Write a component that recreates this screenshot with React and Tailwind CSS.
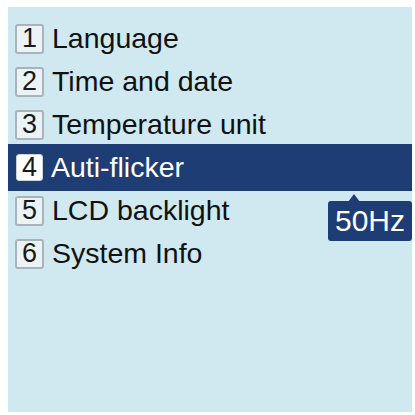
export default function App() {
  const items = ["Language", "Time and date", "Temperature unit", "Auti-flicker", "LCD backlight", "System Info"];
  return (
    <div className="w-[415px] h-[415px] bg-white pt-[7px] pl-[8px]" style={{ fontFamily: '"Liberation Sans", Arial, sans-serif' }}>
      <div className="relative w-[404px] h-[405px] bg-[#d0e8ef] pt-[10px]">
        {items.map((t, i) => {
          const sel = i === 3;
          return (
            <div
              key={t}
              className={
                sel
                  ? "flex items-center h-[47px] -my-[2px] bg-[#1e3d74] pl-[8px] text-white"
                  : "flex items-center h-[43px] pl-[7px] text-[#111111]"
              }
            >
              <div
                className={
                  sel
                    ? "w-[27px] h-[27px] flex items-center justify-center rounded-[3px] bg-white border border-[#c9d3dc] text-[#1a1a1a] text-[27px] leading-none"
                    : "w-[29px] h-[30px] flex items-center justify-center rounded-[3px] bg-[#eaf3f6] border-2 border-[#a9b3b9] text-[#1a1a1a] text-[27px] leading-none"
                }
              >
                {i + 1}
              </div>
              <span className="ml-[8px] text-[28.5px] leading-none">{t}</span>
            </div>
          );
        })}
        <div className="absolute left-[320px] top-[194px] w-[84px] h-[40px] bg-[#1e3d74] rounded-[3px] flex items-center justify-center text-white text-[30px] leading-none">
          50Hz
          <div className="absolute -top-[7px] left-[20px] w-0 h-0 border-l-[6px] border-r-[6px] border-b-[8px] border-l-transparent border-r-transparent border-b-[#1e3d74]" />
        </div>
      </div>
    </div>
  );
}
